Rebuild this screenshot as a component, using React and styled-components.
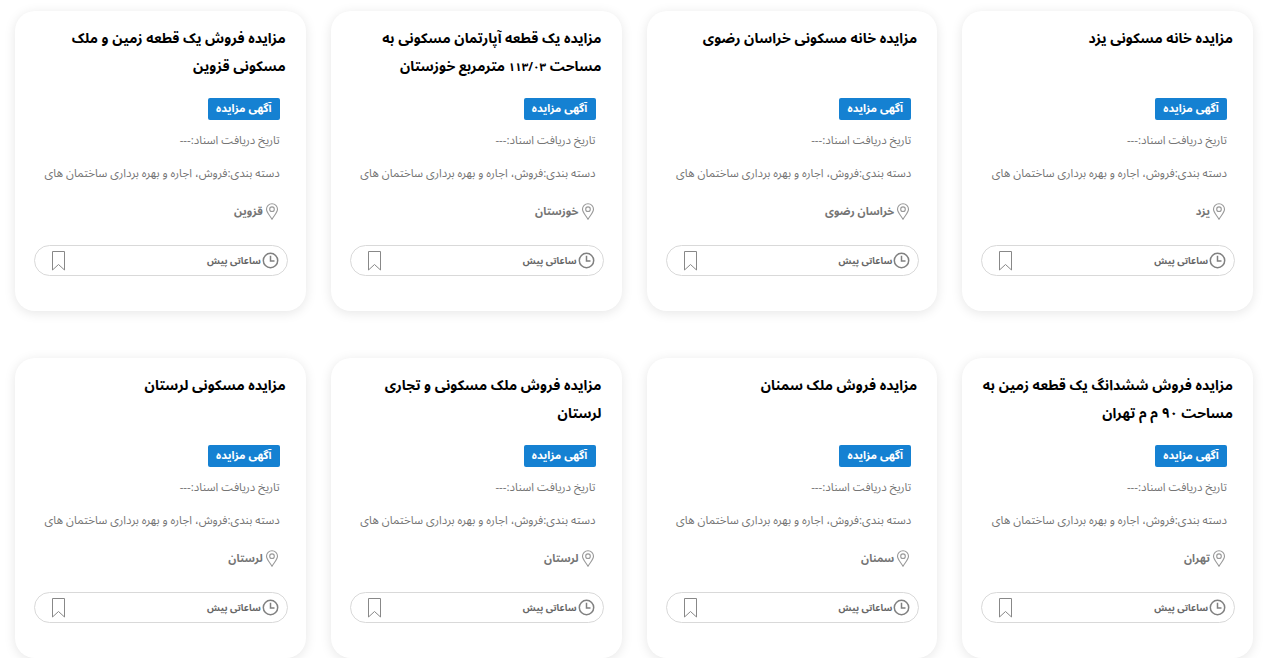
import React from "react";
import styled, { createGlobalStyle } from "styled-components";

const GlobalStyle = createGlobalStyle`
  html, body {
    margin: 0;
    background: #fff;
    overflow: hidden;
  }
  body {
    font-family: "Noto Sans Arabic", "Noto Sans", "DejaVu Sans", sans-serif;
  }
`;

const Grid = styled.div`
  direction: rtl;
  display: grid;
  grid-template-columns: repeat(4, 290.75px);
  column-gap: 25px;
  row-gap: 47px;
  padding: 11px 16px 0 0;
`;

const Card = styled.div`
  height: 300px;
  box-sizing: border-box;
  padding: 14px 20px 0 19px;
  background: #fff;
  border-radius: 20px;
  box-shadow: 0 2px 12px rgba(0, 0, 0, 0.1);
`;

const Title = styled.h3`
  margin: 0;
  height: 73px;
  font-size: 14px;
  font-weight: 700;
  line-height: 28px;
  color: #000;
`;

const Digits = styled.span`
  font-size: 11.500px;
`;

const Badge = styled.span`
  display: block;
  width: 72px;
  height: 22px;
  margin-right: 6px;
  border-radius: 2px;
  background: #1581d2;
  color: #fff;
  font-size: 11px;
  font-weight: 700;
  line-height: 22px;
  text-align: center;
`;

const Meta = styled.div`
  margin: 4px 6px 0 0;
  height: 29px;
  font-size: 11.500px;
  line-height: 29px;
  color: #757575;
  white-space: nowrap;

  &:first-of-type {
    margin-top: 6px;
  }
`;

const Place = styled.div`
  display: flex;
  align-items: center;
  gap: 2px;
  height: 24px;
  margin: 11px 7px 0 0;
  font-size: 11px;
  font-weight: 700;
  color: #757575;
`;

const Footer = styled.div`
  display: flex;
  align-items: center;
  justify-content: space-between;
  box-sizing: border-box;
  height: 31px;
  margin: 22px -2px 0 0;
  padding: 0 8px 0 17px;
  border: 1px solid #d9d9d9;
  border-radius: 16px;
`;

const Time = styled.span`
  display: flex;
  align-items: center;
  gap: 1px;
  font-size: 9.300px;
  font-weight: 700;
  color: #666;
`;

function PinIcon() {
  return (
    <svg width="14" height="17" viewBox="0 0 14 17" fill="none" stroke="#999" strokeWidth="1.100">
      <path d="M7 16.200C4.500 12 1.500 9.200 1.500 6.300a5.500 5.500 0 0 1 11 0C12.500 9.200 9.500 12 7 16.200z" />
      <circle cx="7" cy="6.200" r="2.300" />
    </svg>
  );
}

function ClockIcon() {
  return (
    <svg width="17" height="17" viewBox="0 0 17 17" fill="none" stroke="#808080" strokeWidth="1.500">
      <circle cx="8.500" cy="8.500" r="7.200" />
      <path d="M8.500 3.800V9H12.500" />
    </svg>
  );
}

function BookmarkIcon() {
  return (
    <svg width="13" height="20" viewBox="0 0 13 20" fill="none" stroke="#888" strokeWidth="1">
      <path d="M.5.500H12.500V19L6.500 13.500.5 19z" />
    </svg>
  );
}

const auctions = [
  { title: "مزایده خانه مسکونی یزد", place: "یزد" },
  { title: "مزایده خانه مسکونی خراسان رضوی", place: "خراسان رضوی" },
  {
    title: (
      <>
        مزایده یک قطعه آپارتمان مسکونی به مساحت <Digits>۱۱۳/۰۳</Digits> مترمربع خوزستان
      </>
    ),
    place: "خوزستان",
  },
  { title: "مزایده فروش یک قطعه زمین و ملک مسکونی قزوین", place: "قزوین" },
  { title: "مزایده فروش ششدانگ یک قطعه زمین به مساحت ۹۰ م م تهران", place: "تهران" },
  { title: "مزایده فروش ملک سمنان", place: "سمنان" },
  { title: "مزایده فروش ملک مسکونی و تجاری لرستان", place: "لرستان" },
  { title: "مزایده مسکونی لرستان", place: "لرستان" },
];

export default function App() {
  return (
    <>
      <GlobalStyle />
      <Grid>
        {auctions.map((item, i) => (
          <Card key={i}>
            <Title>{item.title}</Title>
            <Badge>آگهی مزایده</Badge>
            <Meta>تاریخ دریافت اسناد:---</Meta>
            <Meta>دسته بندی:فروش، اجاره و بهره برداری ساختمان های</Meta>
            <Place>
              <PinIcon />
              {item.place}
            </Place>
            <Footer>
              <Time>
                <ClockIcon />
                ساعاتی پیش
              </Time>
              <BookmarkIcon />
            </Footer>
          </Card>
        ))}
      </Grid>
    </>
  );
}
